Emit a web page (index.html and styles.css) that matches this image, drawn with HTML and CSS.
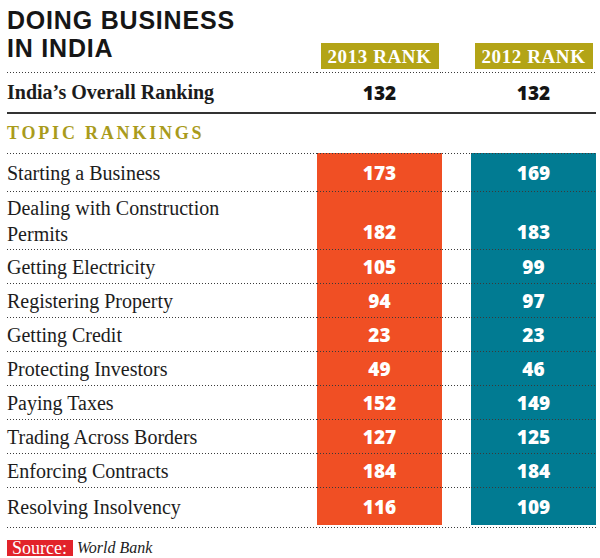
FILE: index.html
```html
<!DOCTYPE html>
<html lang="en">
<head>
<meta charset="utf-8">
<title>Doing Business in India</title>
<link rel="stylesheet" href="styles.css">
</head>
<body>
<div class="page">
  <div class="row head">
    <h1 class="title"><span class="tline">DOING BUSINESS</span><span class="tline">IN INDIA</span></h1>
    <div class="badge">2013 RANK</div>
    <div class="gap"></div>
    <div class="badge">2012 RANK</div>
  </div>
  <div class="row overall">
    <div class="label">India’s Overall Ranking</div>
    <div class="num">132</div>
    <div class="gap"></div>
    <div class="num">132</div>
  </div>
  <div class="section">TOPIC RANKINGS</div>
  <div class="rows">
    <div class="row data first"><div class="label">Starting a Business</div><div class="num y13">173</div><div class="gap"></div><div class="num y12">169</div></div>
    <div class="row data tall"><div class="label">Dealing with Construction<br>Permits</div><div class="num y13">182</div><div class="gap"></div><div class="num y12">183</div></div>
    <div class="row data"><div class="label">Getting Electricity</div><div class="num y13">105</div><div class="gap"></div><div class="num y12">99</div></div>
    <div class="row data"><div class="label">Registering Property</div><div class="num y13">94</div><div class="gap"></div><div class="num y12">97</div></div>
    <div class="row data"><div class="label">Getting Credit</div><div class="num y13">23</div><div class="gap"></div><div class="num y12">23</div></div>
    <div class="row data"><div class="label">Protecting Investors</div><div class="num y13">49</div><div class="gap"></div><div class="num y12">46</div></div>
    <div class="row data"><div class="label">Paying Taxes</div><div class="num y13">152</div><div class="gap"></div><div class="num y12">149</div></div>
    <div class="row data"><div class="label">Trading Across Borders</div><div class="num y13">127</div><div class="gap"></div><div class="num y12">125</div></div>
    <div class="row data"><div class="label">Enforcing Contracts</div><div class="num y13">184</div><div class="gap"></div><div class="num y12">184</div></div>
    <div class="row data last"><div class="label">Resolving Insolvency</div><div class="num y13">116</div><div class="gap"></div><div class="num y12">109</div></div>
  </div>
  <div class="endline"></div>
  <div class="source"><span class="src-tag">Source:</span><span class="src-name">World Bank</span></div>
</div>
</body>
</html>
```
FILE: styles.css
```css
html, body {
  margin: 0;
  padding: 0;
  background: #ffffff;
}

.page {
  width: 589px;
  padding: 7px 4px 0 7px;
  font-family: "Liberation Serif", "Times New Roman", serif;
  color: #1c1c1c;
}

.row {
  display: grid;
  grid-template-columns: 310px 125px 29px 125px;
}

.title {
  margin: -1px 0 0 0;
  font-family: "Liberation Sans", Arial, sans-serif;
  font-weight: 700;
  font-size: 25px;
  letter-spacing: 0.8px;
  color: #161616;
  align-self: start;
  display: flex;
  flex-direction: column;
}

.tline {
  display: block;
  line-height: 28px;
}

.head {
  height: 65px;
  align-items: end;
}

.badge {
  justify-self: center;
  width: 118px;
  height: 26px;
  margin-bottom: 3px;
  background: #b3a416;
  color: #ffffff;
  font-weight: 700;
  font-size: 19px;
  line-height: 27px;
  letter-spacing: 0.6px;
  text-align: center;
}

.overall > *,
.data > * {
  border-top: 1px solid transparent;
  border-image: repeating-linear-gradient(90deg, #3a3a3a 0 1px, transparent 1px 3px) 1 0 0 0 / 1px 0 0 0;
}

.overall {
  height: 40px;
  border-bottom: 2px solid #333333;
  align-items: stretch;
}

.overall .label {
  font-weight: 700;
  font-size: 20px;
  display: flex;
  align-items: center;
}

.num {
  display: flex;
  align-items: center;
  justify-content: center;
  font-family: "Open Sans", "DejaVu Sans", sans-serif;
  font-weight: 800;
  font-size: 19px;
  line-height: 26px;
}

.overall .num {
  color: #141414;
}

.section {
  height: 39px;
  display: flex;
  align-items: center;
  font-weight: 700;
  font-size: 18px;
  letter-spacing: 2.8px;
  color: #a99b1c;
}

.data {
  height: 34px;
}

.data .label {
  display: flex;
  align-items: center;
  font-size: 20px;
  line-height: 26px;
}

.data .num {
  color: #ffffff;
}

.y13 {
  background: #f04f24;
}

.y12 {
  background: #017b92;
}

.data.first,
.data.last {
  height: 38px;
}

.data.tall {
  height: 58px;
}

.data.tall .num {
  align-items: flex-end;
  padding-bottom: 4px;
}

.endline {
  height: 1px;
  margin-top: 2px;
  background: repeating-linear-gradient(90deg, #3a3a3a 0 1px, transparent 1px 3px);
}

.source {
  margin-top: 11px;
  display: flex;
  align-items: center;
  gap: 4px;
}

.src-tag {
  background: #e2232a;
  color: #ffffff;
  font-size: 18px;
  line-height: 16px;
  height: 16px;
  padding: 0 6px 0 5px;
}

.src-name {
  font-style: italic;
  font-size: 16px;
  color: #1c1c1c;
}
```
